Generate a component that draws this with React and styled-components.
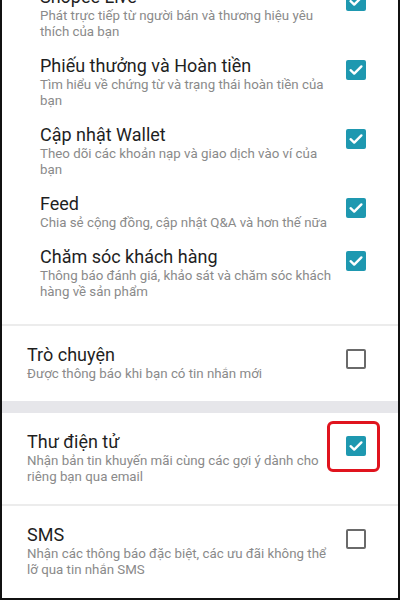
import React from "react";
import styled, {createGlobalStyle} from "styled-components";

const GlobalStyle = createGlobalStyle`
  html, body {
    margin: 0;
    padding: 0;
    background: #ffffff;
  }
`;

const Frame = styled.div`
  box-sizing: border-box;
  width: 400px;
  height: 600px;
  overflow: hidden;
  background: #ffffff;
  border: 2px solid #111111;
  border-top: none;
  font-family: Roboto, "Noto Sans", sans-serif;
`;

// the list is scrolled a little, so the first row is cut at the top
const List = styled.div`
  margin-top: -21px;
`;

const Group = styled.div`
  padding-bottom: 16px;
`;

const Divider = styled.div`
  height: 2px;
  background: #ececec;
`;

const Band = styled.div`
  height: 12px;
  background: #e6e6ea;
`;

const Row = styled.div`
  display: flex;
  align-items: flex-start;
  gap: 6px;
  padding: ${p => p.$sub ? "8px 32px 8px 38px" : "19px 32px 19px 25px"};
`;

const Texts = styled.div`
  flex: 1;
  min-width: 0;
`;

const Title = styled.div`
  font-size: 18px;
  line-height: 20px;
  color: #1f1f1f;
`;

const Hint = styled.div`
  margin-top: 1px;
  font-size: 13.3px;
  line-height: 16px;
  color: #8a8a8a;
`;

const BoxWrap = styled.div`
  position: relative;
  flex: none;
  margin-top: 4px;
  width: 20px;
  height: 20px;
`;

const Box = styled.div`
  box-sizing: border-box;
  width: 20px;
  height: 20px;
  border-radius: 2px;
  background: ${p => p.$on ? "#1e98b0" : "transparent"};
  border: ${p => p.$on ? "none" : "2px solid #6a6a6a"};
  display: flex;
  align-items: center;
  justify-content: center;
`;

// red frame drawn around a highlighted checkbox
const Highlight = styled.div`
  position: absolute;
  left: -19px;
  top: -15px;
  width: 53px;
  height: 51px;
  box-sizing: border-box;
  border: 3px solid #e0141e;
  border-radius: 6px;
`;

const Check = () => (
    <svg width="20" height="20" viewBox="0 0 20 20">
        <path d="M4.6 10.2 L8.2 13.6 L15.4 6.4" fill="none" stroke="#ffffff" strokeWidth="2.4"
              strokeLinecap="round" strokeLinejoin="round"/>
    </svg>
);

const Checkbox = ({on, marked}) => (
    <BoxWrap>
        <Box $on={on}>{on && <Check/>}</Box>
        {marked && <Highlight/>}
    </BoxWrap>
);

const Item = ({title, hint, on, sub, marked}) => (
    <Row $sub={sub}>
        <Texts>
            <Title>{title}</Title>
            <Hint>{hint}</Hint>
        </Texts>
        <Checkbox on={on} marked={marked}/>
    </Row>
);

const pushItems = [
    {title: "Shopee Live", hint: "Phát trực tiếp từ người bán và thương hiệu yêu thích của bạn", on: true},
    {title: "Phiếu thưởng và Hoàn tiền", hint: "Tìm hiểu về chứng từ và trạng thái hoàn tiền của bạn", on: true},
    {title: "Cập nhật Wallet", hint: "Theo dõi các khoản nạp và giao dịch vào ví của bạn", on: true},
    {title: "Feed", hint: "Chia sẻ cộng đồng, cập nhật Q&A và hơn thế nữa", on: true},
    {title: "Chăm sóc khách hàng", hint: "Thông báo đánh giá, khảo sát và chăm sóc khách hàng về sản phẩm", on: true},
];

export default function App() {
    return (
        <Frame>
            <GlobalStyle/>
            <List>
                <Group>
                    {pushItems.map(item => <Item key={item.title} sub {...item}/>)}
                </Group>
                <Divider/>
                <Item title="Trò chuyện" hint="Được thông báo khi bạn có tin nhắn mới" on={false}/>
                <Band/>
                <Item title="Thư điện tử" hint="Nhận bản tin khuyến mãi cùng các gợi ý dành cho riêng bạn qua email"
                      on marked/>
                <Divider/>
                <Item title="SMS" hint="Nhận các thông báo đặc biệt, các ưu đãi không thể lỡ qua tin nhắn SMS"
                      on={false}/>
            </List>
        </Frame>
    );
}
